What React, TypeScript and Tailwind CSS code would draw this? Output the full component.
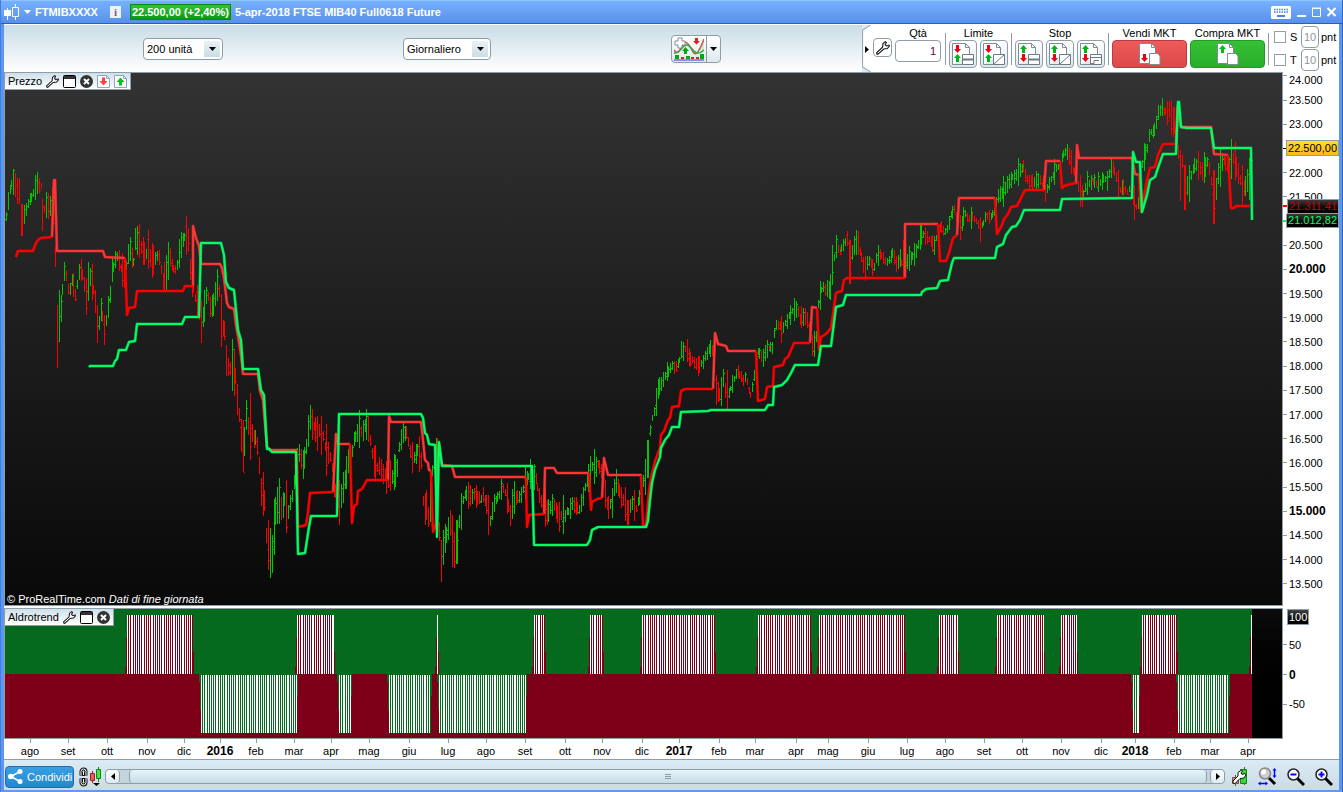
import React from 'react'
import { clsx } from 'clsx'

type Point = [number, number]

// centre of the traded range along the time axis: [x, y]
const PRICE_PATH: Point[] = [
  [5, 224], [8, 200], [10, 190], [13, 174], [16, 192], [19, 190], [22, 217], [25, 212], [28, 203], [31, 196], [34, 190], [37, 184],
  [41, 186], [43, 212], [46, 204], [49, 208], [52, 198], [54, 240], [56, 275], [57, 335], [58, 345], [59, 325], [61, 310], [63, 270],
  [66, 275], [69, 295], [72, 280], [75, 295], [78, 280], [80, 265], [83, 280], [86, 297], [89, 275], [92, 283], [95, 300], [98, 328],
  [101, 310], [104, 330], [107, 315], [110, 293], [112, 270], [115, 260], [118, 257], [121, 268], [124, 278], [127, 258], [130, 250],
  [133, 262], [136, 240], [139, 242], [142, 250], [145, 255], [148, 250], [151, 260], [154, 262], [157, 255], [160, 258], [162, 280],
  [165, 283], [167, 262], [170, 257], [173, 268], [176, 270], [179, 252], [182, 242], [185, 236], [188, 238], [190, 270], [192, 280],
  [194, 295], [197, 300], [200, 315], [202, 330], [204, 305], [207, 292], [211, 310], [214, 300], [217, 286], [219, 290], [221, 320],
  [224, 330], [226, 355], [229, 372], [232, 365], [235, 377], [237, 400], [240, 423], [243, 455], [246, 415], [248, 425], [251, 428],
  [253, 440], [256, 437], [259, 467], [262, 490], [264, 500], [266, 535], [268, 555], [272, 553], [275, 512], [279, 500], [282, 512],
  [284, 500], [287, 515], [291, 500], [293, 490], [296, 467], [299, 453], [303, 465], [307, 440], [309, 420], [313, 425], [316, 433],
  [319, 432], [323, 437], [326, 450], [329, 452], [333, 473], [336, 500], [339, 508], [342, 490], [345, 480], [348, 460], [352, 450],
  [355, 435], [358, 430], [362, 432], [364, 428], [367, 422], [371, 445], [373, 460], [377, 468], [380, 467], [383, 473], [387, 478],
  [391, 480], [394, 472], [397, 467], [399, 447], [403, 434], [406, 432], [409, 447], [413, 462], [417, 450], [421, 460], [423, 500],
  [427, 515], [429, 520], [432, 470], [435, 463], [437, 455], [439, 530], [442, 555], [444, 543], [447, 530], [450, 523], [453, 550],
  [457, 548], [459, 523], [463, 500], [466, 492], [470, 497], [473, 495], [477, 497], [480, 500], [483, 495], [487, 507], [489, 525],
  [493, 507], [497, 497], [500, 492], [503, 488], [507, 500], [510, 515], [513, 497], [517, 497], [520, 498], [523, 490], [527, 478],
  [530, 473], [535, 472], [538, 493], [542, 503], [547, 513], [553, 502], [557, 515], [563, 518], [568, 510], [573, 503], [579, 510],
  [583, 495], [587, 480], [592, 467], [598, 465], [603, 475], [605, 500], [609, 508], [612, 495], [616, 482], [620, 495], [625, 505],
  [628, 513], [632, 502], [637, 508], [642, 483], [646, 475], [648, 445], [651, 422], [655, 408], [658, 390], [662, 380], [667, 372],
  [672, 365], [677, 368], [682, 350], [687, 350], [690, 360], [695, 363], [700, 366], [705, 357], [711, 346], [714, 360], [717, 390],
  [720, 397], [723, 377], [726, 395], [729, 393], [733, 380], [737, 371], [742, 380], [746, 378], [750, 395], [754, 377], [758, 352],
  [763, 358], [767, 348], [772, 348], [775, 325], [782, 328], [787, 320], [792, 312], [796, 307], [800, 318], [805, 315], [809, 327],
  [813, 348], [816, 337], [818, 303], [822, 287], [827, 290], [831, 287], [833, 262], [836, 247], [840, 250], [847, 240], [849, 253],
  [850, 270], [853, 245], [858, 242], [861, 257], [864, 270], [869, 260], [873, 269], [878, 253], [883, 257], [887, 263], [892, 253],
  [896, 263], [900, 258], [903, 267], [908, 260], [915, 253], [922, 233], [928, 237], [934, 245], [939, 225], [943, 232], [948, 227],
  [953, 208], [957, 218], [960, 232], [964, 213], [968, 218], [974, 218], [980, 230], [985, 218], [990, 217], [994, 213], [997, 195],
  [1002, 192], [1007, 185], [1012, 178], [1017, 173], [1023, 167], [1026, 180], [1030, 182], [1035, 182], [1040, 180], [1046, 190],
  [1050, 180], [1055, 170], [1060, 163], [1063, 153], [1068, 153], [1073, 170], [1077, 183], [1082, 197], [1087, 183], [1092, 182],
  [1097, 183], [1102, 180], [1107, 180], [1112, 164], [1115, 173], [1119, 190], [1123, 187], [1127, 192], [1130, 190], [1135, 207],
  [1139, 203], [1142, 163], [1147, 147], [1150, 132], [1154, 130], [1158, 113], [1162, 105], [1166, 115], [1169, 110], [1173, 122],
  [1176, 120], [1179, 167], [1182, 163], [1185, 187], [1189, 183], [1195, 162], [1202, 173], [1207, 162], [1210, 173], [1214, 204],
  [1218, 173], [1223, 160], [1227, 167], [1231, 158], [1235, 162], [1239, 177], [1243, 190], [1248, 180], [1252, 160],
]

// days with an unusually wide range: [x, high, low]
const EXTREMES: [number, number, number][] = [
  [13, 169, 195], [22, 204, 236], [43, 199, 231], [57, 305, 368], [59, 290, 342], [98, 305, 343], [104, 315, 345], [136, 228, 250],
  [165, 262, 290], [188, 228, 252], [202, 300, 343], [226, 345, 376], [243, 420, 472], [246, 400, 430], [262, 478, 506],
  [268, 520, 570], [272, 535, 573], [287, 480, 533], [310, 405, 430], [340, 480, 525], [367, 409, 440], [391, 460, 491],
  [427, 490, 520], [437, 438, 475], [442, 540, 582], [453, 515, 567], [457, 520, 564], [489, 495, 535], [535, 464, 490],
  [547, 500, 525], [563, 495, 534], [605, 480, 508], [613, 488, 518], [628, 500, 525], [646, 459, 495], [648, 440, 478],
  [656, 388, 416], [682, 341, 358], [717, 375, 405], [728, 370, 409], [782, 316, 343], [796, 301, 318], [813, 335, 356],
  [833, 245, 285], [850, 240, 284], [878, 245, 266], [903, 240, 278], [960, 215, 240], [1046, 185, 202], [1080, 175, 207],
  [1112, 158, 178], [1119, 170, 198], [1135, 185, 220], [1162, 98, 116], [1169, 101, 118], [1180, 150, 201], [1185, 165, 210],
  [1190, 165, 202], [1214, 170, 224], [1243, 165, 206], [1249, 158, 200],
]

const SUPPORT_LINES = [
  '16,257 18,251 33,251 36,243 38,240 41,238 52,237',
  '125,258 127,315 129,308 135,307 137,291 183,291 185,286 193,286',
  '297,450 298,527 306,525 308,513 310,493 333,492',
  '350,444 352,523 354,506 357,504 358,491 362,489 367,480 388,480',
  '431,471 433,532 436,523 437,470',
  '526,477 527,527 529,515 544,514',
  '589,473 591,510 592,502 597,499 602,498',
  '641,475 643,525 646,525 649,490 651,478 655,461 660,448 661,435 664,431 668,420 670,418 672,407 679,406 681,391 685,389 713,389',
  '756,351 758,401 765,399 767,387 773,386 774,367 783,365 785,359 788,357 794,343 810,343',
  '817,308 819,350 821,337 826,334 831,328 836,293 838,292 842,291 844,280 847,278 905,278',
  '938,224 940,261 946,261 949,253 953,238 957,235',
  '995,198 997,234 1002,225 1004,219 1008,214 1011,207 1017,206 1021,198 1025,190 1044,190',
  '1060,161 1062,188 1064,186 1071,184 1076,183',
  '1139,175 1141,212 1147,180 1150,168 1155,167 1158,155 1163,144 1176,144',
  '1228,155 1231,208 1234,208 1236,206 1250,206',
]

const RESISTANCE_LINES = [
  '52,237 54,180 55,180 57,251 103,251 105,257 125,258',
  '193,286 193,226 196,238 199,246 201,264 220,264 222,268 224,278 227,303 229,307 234,309 236,325 239,342 241,355 243,374 258,374 260,391 263,400 267,447 271,450 297,450',
  '333,492 336,434 338,444 350,444',
  '388,480 389,416 391,422 421,422 423,440 425,460 428,463 429,470 431,471',
  '437,470 439,445 442,465 452,466 455,477 526,477',
  '544,514 545,468 554,468 557,473 589,473',
  '602,498 604,458 608,475 641,475',
  '713,389 715,333 718,344 726,346 728,351 756,351',
  '810,343 812,307 817,308',
  '905,278 905,224 938,224',
  '957,235 959,198 995,198',
  '1044,190 1046,161 1060,161',
  '1076,183 1077,145 1079,158 1132,158 1135,174 1139,175',
  '1176,144 1178,105 1181,127 1211,127 1214,154 1228,155',
]

const SLOW_LINE =
  '89,367 90,366 113,366 115,361 117,359 119,350 126,350 129,342 135,341 137,324 182,324 185,317 199,317 201,243 221,243 224,255 226,282 229,288 234,290 236,310 238,330 241,340 243,369 258,369 261,390 264,395 267,449 269,449 272,452 296,452 298,554 305,553 307,540 309,527 311,516 337,516 339,414 421,414 423,418 425,433 427,435 429,444 435,445 437,537 439,442 442,466 532,466 534,545 587,545 590,540 592,530 596,528 598,527 646,527 648,521 650,500 652,483 655,470 660,457 661,448 665,440 669,435 672,427 679,427 681,412 708,411 711,410 765,410 768,405 773,405 774,387 782,385 787,380 791,373 795,365 818,365 821,346 831,346 836,307 843,305 846,295 921,295 922,292 926,289 937,288 940,281 948,280 952,263 954,258 995,258 997,247 1003,244 1006,235 1012,227 1016,226 1020,220 1024,210 1060,210 1062,199 1132,198 1133,152 1136,162 1140,162 1142,212 1147,195 1150,180 1155,177 1159,165 1163,154 1176,154 1178,102 1179,102 1181,127 1187,128 1211,128 1214,148 1251,148 1252,220'

const UP_RANGES: Point[] = [
  [127, 193], [297, 334], [437, 438], [534, 545], [590, 603], [642, 715], [758, 811], [819, 905], [939, 958], [997, 1044],
  [1061, 1077], [1142, 1177], [1251, 1252],
]
const DOWN_RANGES: Point[] = [[201, 297], [339, 351], [389, 431], [439, 526], [1133, 1139], [1178, 1229]]

const MONTHS: [number, string][] = [
  [30, 'ago'], [68, 'set'], [107, 'ott'], [147, 'nov'], [184, 'dic'], [220, '2016'], [256, 'feb'], [294, 'mar'], [331, 'apr'],
  [369, 'mag'], [409, 'giu'], [448, 'lug'], [486, 'ago'], [525, 'set'], [565, 'ott'], [602, 'nov'], [642, 'dic'], [679, '2017'],
  [719, 'feb'], [755, 'mar'], [796, 'apr'], [828, 'mag'], [868, 'giu'], [907, 'lug'], [945, 'ago'], [984, 'set'], [1022, 'ott'],
  [1061, 'nov'], [1101, 'dic'], [1135, '2018'], [1174, 'feb'], [1210, 'mar'], [1248, 'apr'],
]

const PRICES = [
  '23.500', '23.000', '22.500', '22.000', '21.500', '21.000', '20.500', '20.000', '19.500', '19.000', '18.500', '18.000',
  '17.500', '17.000', '16.500', '16.000', '15.500', '15.000', '14.500', '14.000', '13.500',
]

const BAR_STEP = 1.82

const noise = (i: number) => {
  const n = Math.sin(i * 127.1 + 11.7) * 43758.5453
  return n - Math.floor(n)
}

const priceAt = (x: number) => {
  const next = PRICE_PATH.findIndex(([px]) => px > x)
  if (next <= 0) return PRICE_PATH[next === 0 ? 0 : PRICE_PATH.length - 1][1]
  const [x0, y0] = PRICE_PATH[next - 1]
  const [x1, y1] = PRICE_PATH[next]
  return y0 + ((y1 - y0) * (x - x0)) / (x1 - x0)
}

const rangeAt = (x: number) => {
  if (x < 54) return 11
  if (x < 62) return 26
  if (x < 215) return 13
  if (x < 300) return 20
  if (x < 460) return 15
  if (x < 650) return 12
  if (x < 1140) return 9
  if (x < 1178) return 10
  return 13
}

const bars = Array.from({ length: 685 }, (_, i) => {
  const x = Math.round(6 + i * BAR_STEP)
  const mid = priceAt(x) + (noise(i) - 0.5) * 3
  const half = rangeAt(x) * (0.3 + noise(i + 900) * noise(i + 500) * 1.5)
  const slope = priceAt(x + 1) - priceAt(x - 2)
  const up = slope + (noise(i + 300) - 0.5) * 3 < 0
  const extreme = EXTREMES.find(([ex]) => ex === x || ex === x + 1)
  const top = extreme ? extreme[1] : Math.round(mid - half)
  const bottom = extreme ? extreme[2] : Math.round(mid + half)
  const open = Math.round(mid + (up ? half : -half) * 0.5)
  const close = Math.round(mid - (up ? half : -half) * 0.6)
  const openTick = i % 3 === 0 ? `M${x - 1} ${open}h1v1h-1z` : ''
  const closeTick = i % 2 === 0 ? `M${x + 1} ${close}h1v1h-1z` : ''
  return { x, up, d: `M${x} ${top}h1V${bottom}h-1z${openTick}${closeTick}` }
}).filter((bar) => bar.x < 1252)

const stripes = (ranges: Point[]) =>
  ranges.flatMap(([from, to]) => {
    const count = Math.ceil((to - from) / BAR_STEP)
    return Array.from({ length: count }, (_, i) => Math.round(from + i * BAR_STEP)).filter((x) => x < to)
  })

const PriceChart = () => (
  <svg className="block h-full w-full" viewBox="5 73 1277 532" preserveAspectRatio="none" aria-hidden="true">
    <g shapeRendering="crispEdges">
      <path fill="#ff0000" d={bars.filter((b) => !b.up).map((b) => b.d).join('')} />
      <path fill="#00c800" d={bars.filter((b) => b.up).map((b) => b.d).join('')} />
    </g>
    <g fill="none" strokeLinejoin="round">
      {RESISTANCE_LINES.map((points) => (
        <g key={points} stroke="#ff3535">
          <polyline points={points} strokeWidth="3" strokeOpacity="0.5" />
          <polyline points={points} strokeWidth="2" />
        </g>
      ))}
      {SUPPORT_LINES.map((points) => (
        <g key={points} stroke="#ff0000">
          <polyline points={points} strokeWidth="3" strokeOpacity="0.5" />
          <polyline points={points} strokeWidth="2" />
        </g>
      ))}
      <polyline points={SLOW_LINE} stroke="#00ff66" strokeWidth="3" strokeOpacity="0.5" />
      <polyline points={SLOW_LINE} stroke="#00ff66" strokeWidth="2" />
    </g>
  </svg>
)

const TrendChart = () => (
  <svg
    className="block h-full w-full"
    viewBox="5 609 1277 129"
    preserveAspectRatio="none"
    shapeRendering="crispEdges"
    aria-hidden="true"
  >
    <rect x="5" y="609" width="1247" height="65" fill="#056a1e" />
    <rect x="5" y="674" width="1247" height="64" fill="#7d0018" />
    {UP_RANGES.map(([from, to]) => (
      <g key={from} fill="#7d0018">
        <rect x={from} y="615" width={to - from} height="59" />
        <rect x={from - 1} y="637" width="1" height="37" />
        <rect x={from - 2} y="667" width="1" height="7" />
        <rect x={to} y="652" width={to > 1250 ? 0 : 1} height="22" />
      </g>
    ))}
    {DOWN_RANGES.map(([from, to]) => (
      <g key={from} fill="#056a1e">
        <rect x={from} y="674" width={to - from} height="59" />
        <rect x={from - 1} y="674" width="1" height="36" />
        <rect x={from - 2} y="674" width="1" height="8" />
        <rect x={to} y="674" width="1" height="22" />
      </g>
    ))}
    <path fill="#fff" d={stripes(UP_RANGES).map((x) => `M${x} 615h1v59h-1z`).join('')} />
    <path fill="#fff" d={stripes(DOWN_RANGES).map((x) => `M${x} 675h1v58h-1z`).join('')} />
  </svg>
)

const Wrench = ({ className }: { className?: string }) => (
  <svg className={className} viewBox="0 0 14 14" fill="#fff" stroke="#111" strokeWidth="1.1" aria-hidden="true">
    <path d="M9.3.7 7 2.6 6.6 6.2.8 11.5.7 12.8 1.8 13.3 7.8 8 11.3 7.6 13.4 5.2 13 4.1 10.7 5 9.2 3.9 10.3 1.5z" />
  </svg>
)

const MiniOrder = ({ down }: { down?: boolean }) => (
  <svg className="size-[13px]" viewBox="0 0 13 13" aria-hidden="true">
    <path d="M.5.5h9l3 3v9H.5z" fill="#fff" stroke="#8ca5cf" />
    <path d="M9.5.5v3h3" fill="none" stroke="#8ca5cf" />
    {down ? (
      <path d="M5 2.5h3V6h2.5l-4 4.5L2.5 6H5z" fill="#ff4040" />
    ) : (
      <path d="M5 10.5h3V7h2.5l-4-4.5L2.5 7H5z" fill="#00c814" />
    )}
  </svg>
)

const PanelTab = ({ title, orders }: { title: string; orders?: boolean }) => (
  <div className="absolute top-0 left-0 flex h-[17px] items-center gap-1 border-r border-b border-[#90a0aa] bg-linear-to-b from-[#cfe0e8] to-white pr-[3px] pl-[3px] text-black">
    <span>{title}</span>
    <button type="button" aria-label={`Impostazioni ${title}`}>
      <Wrench className="size-[13px]" />
    </button>
    <button type="button" aria-label={`Ingrandisci ${title}`}>
      <svg className="size-[13px]" viewBox="0 0 13 13" aria-hidden="true">
        <rect x="0.5" y="0.5" width="12" height="12" rx="1" fill="#fff" stroke="#000" />
        <path d="M1 1h11v3H1z" fill="#333" />
      </svg>
    </button>
    <button type="button" aria-label={`Chiudi ${title}`}>
      <svg className="size-[13px]" viewBox="0 0 13 13" aria-hidden="true">
        <circle cx="6.5" cy="6.5" r="6.5" fill="#333" />
        <path d="m4 4 5 5M9 4 4 9" stroke="#fff" strokeWidth="2" />
      </svg>
    </button>
    {orders ? (
      <>
        <button type="button" aria-label="Ordine di vendita">
          <MiniOrder down />
        </button>
        <button type="button" aria-label="Ordine di acquisto">
          <MiniOrder />
        </button>
      </>
    ) : null}
  </div>
)

const DOWN_ARROW = 'M2 0h3v4h2L3.5 8 0 4h2z'
const UP_ARROW = 'M2 8h3V4h2L3.5 0 0 4h2z'

type OrderKind = 'box' | 'slash' | 'trail'

const OrderButton = ({ label, kind, stop }: { label: string; kind: OrderKind; stop?: boolean }) => (
  <button
    type="button"
    aria-label={label}
    className="flex size-7 items-center justify-center rounded border border-[#8f9ea6] bg-linear-to-b from-white to-[#dfe8ec]"
  >
    <svg className="size-6" viewBox="2 2 24 24" aria-hidden="true">
      <path d="M3.5 24.5v-21h13l4 4v7" fill="#fff" stroke="#7c8d94" />
      <path d="M3.5 24.5h10M16.5 3.5v4h4" fill="none" stroke="#7c8d94" />
      <path d={stop ? UP_ARROW : DOWN_ARROW} transform="translate(5 5)" fill={stop ? '#00b414' : '#f00010'} />
      <path d={stop ? DOWN_ARROW : UP_ARROW} transform="translate(5 14)" fill={stop ? '#f00010' : '#00b414'} />
      <path d="M13.5 14.5h11v10h-11z" fill="#fff" stroke="#6b7c84" />
      {kind === 'box' ? <path d="M13 19.5h12" stroke="#6b7c84" strokeWidth="2" /> : null}
      {kind === 'slash' ? <path d="m14 24 10-9" stroke="#6b7c84" /> : null}
      {kind === 'trail' ? <path d="M14 17.500h10M22 20.500h-5v3h-3" fill="none" stroke="#6b7c84" /> : null}
    </svg>
  </button>
)

const MarketButton = ({ label, sell }: { label: string; sell?: boolean }) => (
  <div className="flex flex-col items-center">
    <span className="h-[15px] leading-4 whitespace-nowrap">{label}</span>
    <button
      type="button"
      aria-label={label}
      className={clsx(
        'flex h-7 w-[75px] items-center justify-center rounded border',
        sell ? 'border-[#b93a3f] bg-linear-to-b from-[#ee5b5b] to-[#dd4848]' : 'border-[#229a28] bg-linear-to-b from-[#35c035] to-[#28ae2b]'
      )}
    >
      <svg className="size-[22px]" viewBox="0 0 22 22" aria-hidden="true">
        <path d="M.5.5h12l4 4v16H.5z" fill="#fff" stroke="#7c8d94" />
        <path d="M12.5.5v4h4" fill="none" stroke="#7c8d94" />
        {sell ? (
          <path d={DOWN_ARROW} transform="translate(2 11)" fill="#e80010" />
        ) : (
          <path d={UP_ARROW} transform="translate(2 2)" fill="#00c014" />
        )}
        <path d="M10.5 10.5h8l2.500 2.500v8.500h-10.500z" fill="#fff" stroke="#7c8d94" />
      </svg>
    </button>
  </div>
)

const Separator = () => <div className="mx-[3px] mt-2 h-8 w-px shrink-0 bg-[#8f9ea6]" />

const Dropdown = ({ label, value, className }: { label: string; value: string; className: string }) => (
  <div className={clsx('relative h-[22px] shrink-0', className)}>
    <select
      aria-label={label}
      defaultValue={value}
      className="h-full w-full appearance-none rounded border border-[#8f9ea6] bg-white pl-[3px] text-[11px] text-black"
    >
      <option>{value}</option>
    </select>
    <span className="pointer-events-none absolute top-[3px] right-[3px] flex h-4 w-4 items-center justify-center bg-linear-to-b from-[#eaf2f5] to-[#c9dde6]">
      <svg className="h-1 w-[7px]" viewBox="0 0 7 4" aria-hidden="true">
        <path d="M0 0h7L3.5 4z" />
      </svg>
    </span>
  </div>
)

const PointsRow = ({ name }: { name: string }) => (
  <div className="flex h-[23px] items-center">
    <label className="flex w-6 items-center gap-1">
      <input type="checkbox" className="size-3 shrink-0 appearance-none border border-[#8f9ea6] bg-white" />
      {name}
    </label>
    <input
      aria-label={`Punti ${name}`}
      defaultValue="10"
      className="ml-[3px] h-[22px] w-[18px] rounded border border-[#8f9ea6] bg-white text-center text-[11px] text-[#8c9499]"
    />
    <span className="ml-0.5">pnt</span>
  </div>
)

const TitleBar = () => (
  <header className="flex h-6 shrink-0 items-center border-t border-b border-t-[#8cc4ff] border-b-[#2060c8] bg-linear-to-b from-[#78b0ff] to-[#5890ea] pr-[6px] pl-[3px] font-bold text-white">
    <svg className="size-4" viewBox="0 0 16 16" aria-hidden="true">
      <path d="M0 6h7v6H0zM3 4h1v12H3zM11 0h1v3h-1zM11 13h1v3h-1z" fill="#fff" />
      <path d="M8.5 3.5h6v9h-6z" fill="none" stroke="#fff" />
    </svg>
    <button type="button" className="ml-1 flex items-center gap-1">
      <svg className="h-1 w-[7px]" viewBox="0 0 7 4" aria-hidden="true">
        <path d="M0 0h7L3.5 4z" fill="#fff" />
      </svg>
      FTMIBXXXX
    </button>
    <button
      type="button"
      aria-label="Informazioni"
      className="ml-3 flex h-3 w-[11px] items-center justify-center bg-[#eef2f6] font-[Liberation_Serif,serif] leading-3 text-[#667]"
    >
      i
    </button>
    <span className="ml-[9px] border border-[#078a10] bg-linear-to-b from-[#2fc434] to-[#0b9a16] px-px leading-[14px] whitespace-nowrap">
      22.500,00 (+2,40%)
    </span>
    <h1 className="ml-1 whitespace-nowrap">5-apr-2018 FTSE MIB40 Full0618 Future</h1>
    <div className="ml-auto flex items-center gap-1.5">
      <button type="button" aria-label="Tastiera">
        <svg className="h-[13px] w-5" viewBox="0 0 20 13" aria-hidden="true">
          <rect width="20" height="13" rx="1.5" fill="#fff" />
          <path d="M3 3.5h14M3 6h14" stroke="#4a80d8" strokeWidth="1.5" strokeDasharray="1.5 1" />
          <path d="M6 10h8" stroke="#4a80d8" strokeWidth="2" />
        </svg>
      </button>
      <button type="button" aria-label="Riduci">
        <svg className="h-3 w-[9px]" viewBox="0 0 9 12" aria-hidden="true">
          <path d="M0 9h9v2H0z" fill="#fff" />
        </svg>
      </button>
      <button type="button" aria-label="Ingrandisci">
        <svg className="h-3 w-[9px]" viewBox="0 0 9 12" aria-hidden="true">
          <path d="M.5 2.5h8v8h-8zM0 2h9" fill="none" stroke="#fff" />
        </svg>
      </button>
      <button type="button" aria-label="Chiudi">
        <svg className="h-3 w-[9px]" viewBox="0 0 9 12" aria-hidden="true">
          <path d="m.5 2 8 8m0-8-8 8" stroke="#fff" strokeWidth="2" />
        </svg>
      </button>
    </div>
  </header>
)

const Toolbar = () => (
  <div className="flex h-12 shrink-0 border-t border-white bg-linear-to-b from-[#c9dde6] to-white">
    <div className="flex flex-1 items-center">
      <div className="grow-[139]" />
      <Dropdown label="Unità" value="200 unità" className="w-20" />
      <div className="grow-[180]" />
      <Dropdown label="Periodicità" value="Giornaliero" className="w-[88px]" />
      <div className="grow-[180]" />
      <div className="flex h-7 rounded border border-[#8f9ea6] bg-linear-to-b from-white to-[#dfe8ec]">
        <button type="button" aria-label="Aggiungi indicatore" className="flex w-[34px] items-center justify-center">
          <svg className="h-6 w-[30px]" viewBox="0 0 30 24" fill="none" aria-hidden="true">
            <path d="M0 15c5 4 7-5 11-7l4 1c5 4 5 9 9 7 3-3 4-8 6-13v11c-4 3-8 3-12 0-3-3-5-7-9-4-3 4-5 8-9 7z" fill="#cfe9cf" />
            <path d="M0 13c5 7 7-4 10-7s7 5 9 9c2 3 4 2 6-2 2-3 3-6 5-11" stroke="#d05050" strokeWidth="1.5" />
            <path d="M0 16c6 1 7-6 12-8 5-1 6 8 12 8 3 0 4-1 6-3" stroke="#3aa83a" strokeWidth="1.5" />
            <path d="M4 1h4v3h3v4H8v3H4V8H1V4h3z" fill="#fff" stroke="#7c8d94" />
            <path d="M21 1h3v3h2l-3.5 3.500L19 4h2zM7 20h3v2H7zM17 20h3v2h-3zM22 20h3v2h-3z" fill="#e02020" />
            <path d="M10 17h3v-3h2l-3.500-4L8 14h2zM1 18h4v4H1zM12 19h4v3h-4zM26 17h4v5h-4z" fill="#00a814" />
            <path d="M0 23h30" stroke="#33f" />
          </svg>
        </button>
        <button
          type="button"
          aria-label="Altri indicatori"
          className="flex w-3.5 items-center justify-center border-l border-[#8f9ea6]"
        >
          <svg className="h-1 w-[7px]" viewBox="0 0 7 4" aria-hidden="true">
            <path d="M0 0h7L3.5 4z" fill="#000" />
          </svg>
        </button>
      </div>
      <div className="grow-[141]" />
    </div>
    <div className="flex shrink-0 bg-white">
      <button type="button" aria-label="Nascondi pannello ordini">
        <svg className="h-[47px] w-[9px]" viewBox="0 0 9 48" aria-hidden="true">
          <path d="M0 0h9L.5 6v36L9 48H0z" fill="#dde9ef" />
          <path d="M9 0 .5 5v38L9 48" fill="none" stroke="#8f9ea6" />
          <path d="M3 21.5v7L7 25z" fill="#000" />
        </svg>
      </button>
      <button
        type="button"
        aria-label="Impostazioni ordini"
        className="mt-[13px] ml-0.5 flex size-[19px] items-center justify-center rounded border border-[#8f9ea6] bg-white"
      >
        <Wrench className="size-3.5" />
      </button>
      <label className="ml-[3px] flex flex-col items-center">
        <span className="h-[15px] leading-4">Qtà</span>
        <input
          defaultValue="1"
          className="h-[22px] w-[46px] rounded border border-[#8f9ea6] bg-white pr-1 text-right text-[11px] text-[#60004a]"
        />
      </label>
      <div className="w-px" />
      <Separator />
      <div className="flex flex-col items-center">
        <span className="h-[15px] leading-4">Limite</span>
        <div className="flex gap-[3px]">
          <OrderButton label="Limite a prezzo" kind="box" />
          <OrderButton label="Limite obliquo" kind="slash" />
        </div>
      </div>
      <Separator />
      <div className="flex flex-col items-center">
        <span className="h-[15px] leading-4">Stop</span>
        <div className="flex gap-[3px]">
          <OrderButton label="Stop a prezzo" kind="box" stop />
          <OrderButton label="Stop obliquo" kind="slash" stop />
          <OrderButton label="Stop dinamico" kind="trail" stop />
        </div>
      </div>
      <Separator />
      <div className="flex gap-[3px]">
        <MarketButton label="Vendi MKT" sell />
        <MarketButton label="Compra MKT" />
      </div>
      <Separator />
      <div className="w-[67px] pl-0.5">
        <PointsRow name="S" />
        <PointsRow name="T" />
      </div>
    </div>
  </div>
)

const PriceAxis = () => (
  <div className="relative flex w-14 shrink-0 flex-col bg-white pb-2.5">
    <div className="flex h-4 items-center gap-0.5 pb-px">
      <span className="mb-2 h-px w-1 bg-[#8f9ea6]" />
      24.000
    </div>
    {PRICES.map((price) => (
      <div key={price} className="flex min-h-0 flex-1 items-center gap-0.5 leading-3">
        <span className={clsx('h-px w-1', price === '22.500' ? 'bg-black' : 'bg-[#8f9ea6]')} />
        {price === '22.500' ? (
          <span className="-ml-0.5 border border-[#8f9ea6] bg-linear-to-b from-[#ffe020] to-[#ffb820] px-px leading-[14px]">22.500,00</span>
        ) : (
          <span className={clsx((price === '20.000' || price === '15.000') && 'text-xs font-bold')}>
            {price === '21.000' ? '' : price}
          </span>
        )}
      </div>
    ))}
    <div className="absolute top-[23.7%] right-0 left-0 flex flex-col">
      <div className="flex items-center">
        <span className="h-0.5 w-1 bg-[#ff0000]" />
        <span className="border border-[#8f9ea6] bg-linear-to-b from-[#3a3a3a] to-black px-px leading-[13px] text-[#c80000]">21.311,41</span>
      </div>
      <div className="flex items-center">
        <span className="h-0.5 w-1 bg-[#00ff66]" />
        <span className="border border-t-0 border-[#8f9ea6] bg-linear-to-b from-[#3a3a3a] to-black px-px leading-[13px] text-[#00ff66]">
          21.012,82
        </span>
      </div>
    </div>
  </div>
)

const TrendAxis = () => (
  <div className="flex w-14 shrink-0 flex-col bg-white pt-px pb-5">
    <div className="flex h-4 items-center pl-1">
      <span className="border border-[#8f9ea6] bg-linear-to-b from-[#444] to-black px-px leading-[14px] text-white">100</span>
    </div>
    <div className="h-[5px]" />
    {['50', '0', '-50'].map((value) => (
      <div key={value} className="flex flex-1 items-center gap-0.5">
        <span className="h-px w-1 bg-[#8f9ea6]" />
        <span className={clsx(value === '0' && 'text-xs font-bold')}>{value}</span>
      </div>
    ))}
  </div>
)

const TimeAxis = () => (
  <div className="flex h-5 shrink-0 bg-white">
    {MONTHS.map(([x, name], i) => (
      <div key={x} className="flex basis-0 justify-end" style={{ flexGrow: x - (i ? MONTHS[i - 1][0] : 4) }}>
        <div className="flex w-0 flex-col items-center">
          <span className="h-1 w-px shrink-0 bg-[#8f9ea6]" />
          <span className={clsx('leading-4', name.startsWith('20') && 'text-xs leading-4 font-bold')}>{name}</span>
        </div>
      </div>
    ))}
    <div className="grow-[91] basis-0" />
  </div>
)

const ZoomIcon = ({ plus }: { plus?: boolean }) => (
  <svg className="size-[18px]" viewBox="0 0 18 18" aria-hidden="true">
    <path d="m10 10 7 7" stroke="#000" strokeWidth="3" />
    <circle cx="6.5" cy="6.5" r="5.5" fill="#fff" stroke="#222" strokeWidth="1.5" />
    <path d={plus ? 'M3.5 6.5h6M6.5 3.500v6' : 'M3.5 6.5h6'} stroke="#0000ff" strokeWidth="2" />
  </svg>
)

const BottomBar = () => (
  <footer className="flex h-[31px] shrink-0 items-center border-t border-[#8f9ea6] bg-linear-to-b from-[#dcebf5] to-[#c9dbe5] pt-[3px] pr-1.5 pl-px">
    <button
      type="button"
      className="flex h-[22px] w-[69px] items-center gap-1 rounded border border-[#1f6dac] bg-linear-to-b from-[#38a0e4] to-[#2688cc] pl-0.5 text-white"
    >
      <svg className="size-[15px] shrink-0" viewBox="0 0 15 15" aria-hidden="true">
        <path d="M12 2.5 3 7.5l9 5" fill="none" stroke="#fff" strokeWidth="1.5" />
        <g fill="#fff">
          <circle cx="12" cy="2.5" r="2.5" />
          <circle cx="2.800" cy="7.500" r="2.800" />
          <circle cx="12" cy="12.5" r="2.5" />
        </g>
      </svg>
      Condividi
    </button>
    <button type="button" aria-label="Collega grafici" className="ml-[5px]">
      <svg className="h-5 w-[23px]" viewBox="0 0 23 20" aria-hidden="true">
        <g fill="none" stroke="#111" strokeWidth="3">
          <path d="M2 8.500V4.500a2.500 2.500 0 0 1 5 0v4M2 11.500v4a2.500 2.500 0 0 0 5 0v-4M4.500 5v4M4.500 11v4" />
        </g>
        <g fill="none" stroke="#fff">
          <path d="M2 8V4.500a2.500 2.500 0 0 1 5 0V8M2 12v3.500a2.500 2.500 0 0 0 5 0V12M4.500 5v3M4.500 12v3" />
        </g>
        <path d="M13.500 4v12" stroke="#a02020" />
        <path d="M11.500 6.500h4v7h-4z" fill="#ee5b5b" stroke="#a02020" />
        <path d="M19.500 0v15" stroke="#0a8a14" />
        <path d="M17.500 2.500h4v9h-4z" fill="#4be04b" stroke="#0a8a14" />
        <path d="M14 16h7l-3.500 3z" fill="#000" />
      </svg>
    </button>
    <div className="ml-[3px] flex h-[15px] flex-1 rounded border border-[#8f9ea6] bg-[#c3d4dd]">
      <button
        type="button"
        aria-label="Scorri indietro"
        className="flex w-3.5 items-center justify-center rounded border-r border-[#8f9ea6] bg-linear-to-b from-white to-[#dcebf2]"
      >
        <svg className="h-[7px] w-1" viewBox="0 0 4 7" aria-hidden="true">
          <path d="M4 0v7L0 3.5z" />
        </svg>
      </button>
      <div className="ml-[9px] flex flex-1 flex-col items-center justify-center gap-px rounded border-x border-[#8f9ea6] bg-linear-to-b from-[#e4f6fb] to-[#c7dbe4]">
        <span className="h-px w-1.5 bg-[#8f9ea6]" />
        <span className="h-px w-1.5 bg-[#8f9ea6]" />
        <span className="h-px w-1.5 bg-[#8f9ea6]" />
      </div>
      <button
        type="button"
        aria-label="Scorri avanti"
        className="ml-[3px] flex w-3.5 items-center justify-center rounded border-l border-[#8f9ea6] bg-linear-to-b from-white to-[#dcebf2]"
      >
        <svg className="h-[7px] w-1" viewBox="0 0 4 7" aria-hidden="true">
          <path d="M0 0v7l4-3.5z" />
        </svg>
      </button>
    </div>
    <div className="ml-[7px] flex items-center">
      <button type="button" aria-label="Impostazioni grafico">
        <svg className="h-[19px] w-4" viewBox="0 0 16 19" aria-hidden="true">
          <path d="M3.500 8v11M12.500 0v18" stroke="#555" />
          <path d="M.5 10.500h6v6h-6z" fill="#e08080" stroke="#844" />
          <path d="M8.500 2.500h6v14h-6z" fill="#3fd03f" stroke="#0a8a14" />
          <path d="M9.500 3 6 5.500 6 9 1 14v2l2 .5L8 11.500l4-.5 2-3-1-1.500-3 1-1-1.500 1.500-2z" fill="#fff" stroke="#111" />
        </svg>
      </button>
      <button type="button" aria-label="Adatta zoom" className="ml-2.5">
        <svg className="size-[19px]" viewBox="0 0 19 19" aria-hidden="true">
          <path d="m10 10 7 7" stroke="#000" strokeWidth="3" />
          <circle cx="7" cy="6.5" r="5.5" fill="#ccc" stroke="#888" strokeWidth="1.5" />
          <circle cx="5.500" cy="5" r="2.5" fill="#fff" />
          <path d="M16.500 3v6M2 16.500h6" stroke="#00f" strokeWidth="1.500" />
          <path d="m14.500 3.500 2-2.500 2 2.500zM14.500 8.500l2 2.500 2-2.500zM2.500 14.500 0 16.500l2.500 2zM7.500 14.500l2.500 2-2.500 2z" fill="#00f" />
        </svg>
      </button>
      <button type="button" aria-label="Riduci zoom" className="ml-2.5">
        <ZoomIcon />
      </button>
      <button type="button" aria-label="Aumenta zoom" className="ml-2.5">
        <ZoomIcon plus />
      </button>
    </div>
  </footer>
)

export default function App() {
  return (
    <div className="flex h-screen min-h-[480px] flex-col border-x border-r-[#2f68c8] border-l-[#3f7fdd] bg-[#6199ef] font-['Liberation_Sans',Arial,sans-serif] text-[11px] leading-4 text-black">
      <TitleBar />
      <main className="mb-0.5 flex min-h-0 flex-1 flex-col border-x-3 border-[#5c96ee] bg-white">
        <Toolbar />
        <section aria-label="Prezzo" className="flex min-h-0 flex-1">
          <div className="relative min-w-0 flex-1 border border-[#8f9ea6] bg-linear-to-b from-[#333] to-[#090909]">
            <PriceChart />
            <PanelTab title="Prezzo" orders />
            <p className="absolute bottom-0 left-0.5 leading-3 text-white">
              © ProRealTime.com <em>Dati di fine giornata</em>
            </p>
          </div>
          <PriceAxis />
        </section>
        <section aria-label="Aldrotrend" className="mt-0.5 flex h-[131px] shrink-0">
          <div className="relative min-w-0 flex-1 border border-[#8f9ea6] bg-linear-to-b from-[#0c0c0c] to-black">
            <TrendChart />
            <PanelTab title="Aldrotrend" />
          </div>
          <TrendAxis />
        </section>
        <TimeAxis />
        <BottomBar />
      </main>
    </div>
  )
}
